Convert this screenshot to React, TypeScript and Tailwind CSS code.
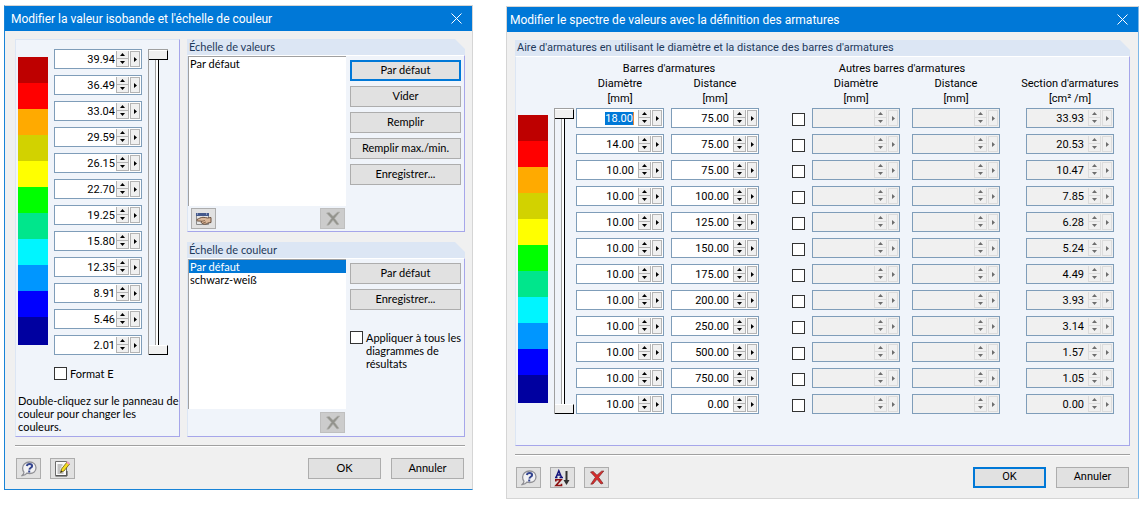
import { useState, type ReactNode } from "react";
import clsx from "clsx";

const BANDS = [
  "bg-[#be0000]",
  "bg-[#ff0000]",
  "bg-[#ffaa00]",
  "bg-[#d2d200]",
  "bg-[#ffff00]",
  "bg-[#00ff00]",
  "bg-[#00e68c]",
  "bg-[#00f5ff]",
  "bg-[#0096ff]",
  "bg-[#0000ff]",
  "bg-[#0000a0]",
];

const ISO_VALUES = [
  "39.94", "36.49", "33.04", "29.59", "26.15", "22.70",
  "19.25", "15.80", "12.35", "8.91", "5.46", "2.01",
];

const REBARS = [
  { diameter: "18.00", distance: "75.00", area: "33.93" },
  { diameter: "14.00", distance: "75.00", area: "20.53" },
  { diameter: "10.00", distance: "75.00", area: "10.47" },
  { diameter: "10.00", distance: "100.00", area: "7.85" },
  { diameter: "10.00", distance: "125.00", area: "6.28" },
  { diameter: "10.00", distance: "150.00", area: "5.24" },
  { diameter: "10.00", distance: "175.00", area: "4.49" },
  { diameter: "10.00", distance: "200.00", area: "3.93" },
  { diameter: "10.00", distance: "250.00", area: "3.14" },
  { diameter: "10.00", distance: "500.00", area: "1.57" },
  { diameter: "10.00", distance: "750.00", area: "1.05" },
  { diameter: "10.00", distance: "0.00", area: "0.00" },
];

type ButtonProps = {
  children: ReactNode;
  className?: string;
  primary?: boolean;
};

function Button({ children, className, primary }: ButtonProps) {
  return (
    <button
      type="button"
      className={clsx(
        "flex h-[21px] items-center justify-center whitespace-nowrap bg-[#e1e1e1]",
        primary ? "border-2 border-[#0078d7]" : "border border-[#adadad]",
        className
      )}
    >
      {children}
    </button>
  );
}

function IconButton({ label, disabled, children }: { label: string; disabled?: boolean; children: ReactNode }) {
  return (
    <button
      type="button"
      aria-label={label}
      disabled={disabled}
      className={clsx(
        "flex h-[21px] w-[25px] shrink-0 items-center justify-center border",
        disabled ? "border-[#bfbfbf] bg-[#cccccc]" : "border-[#adadad] bg-[#e1e1e1]"
      )}
    >
      {children}
    </button>
  );
}

function HelpIcon() {
  return (
    <svg width="16" height="16" viewBox="0 0 16 16">
      <path
        d="M8.500 1C12.400 1 15 3.400 15 6.800s-2.700 5.700-6.300 5.700c-1 0-1.900-.1-2.700-.4C5 13.500 3.400 14.300 1.200 14.500c1.100-.9 1.700-1.800 1.700-3.300C2 10.100 1.600 8.700 1.600 7 1.600 3.500 4.700 1 8.500 1z"
        fill="#f2f2f4"
        stroke="#909095"
        strokeWidth="1.300"
      />
      <path d="M5.800 5C6.100 3.500 7.100 2.900 8.500 2.900c1.700 0 2.600.8 2.600 2 0 1.900-2.500 1.800-2.700 3.700" fill="none" stroke="#34458f" strokeWidth="2" />
      <rect x="7.200" y="9.500" width="2" height="2" fill="#34458f" />
    </svg>
  );
}

function EditIcon() {
  return (
    <svg width="17" height="17" viewBox="0 0 17 17">
      <path d="M1.500 1.500h11v14h-11z" fill="#fafafa" stroke="#6c6c6c" />
      <path d="M1.500 16h11.500V11" fill="none" stroke="#444" />
      <path d="M3.500 5h5M3.500 7h4M3.500 9h3M3.500 11h3M3.500 13h6" stroke="#8a8a8a" />
      <path d="M6.500 12.500l1-3.500 5.500-7 2.500 2-5.500 7z" fill="#f5dc1e" stroke="#6b5a10" strokeWidth=".8" />
      <path d="M6.500 12.500l.6-2 1.400 1.100z" fill="#222" />
      <path d="M12.300 2.800l1.200-1.600 2.500 2-1.200 1.600z" fill="#f29bc0" />
    </svg>
  );
}

function BrowseIcon() {
  return (
    <svg width="17" height="14" viewBox="0 0 17 14">
      <path d="M1.500 1.500h12v11h-12z" fill="#e6e6e6" stroke="#8a8a8a" />
      <path d="M1 1h13v3H1z" fill="#44598c" />
      <path d="M2 2h1M11 2h1" stroke="#c8d4ee" />
      <path
        d="M2 7.500C4 6.500 5.500 5.500 8 5.300c2 0 3 .5 4.500.7l3.500-.5v5l-3 .5c-1.500 1-3 1.500-4.500 1L6 10.500l.8-1.300L3 9c-1.200 0-1.500-.8-1-1.500z"
        fill="#d9b79a"
        stroke="#5d4433"
        strokeWidth=".9"
      />
      <path d="M7 9.200l3-.7M8 11l3-1" stroke="#7b5a42" strokeWidth=".8" />
    </svg>
  );
}

function SortIcon() {
  return (
    <svg width="17" height="18" viewBox="0 0 17 18" fill="none">
      <path d="M1 8.500h2.500M5.500 8.500H9M2 8.500L4.800 1.800 7.600 8.500M3 6h3.500" stroke="#14147d" strokeWidth="1.500" />
      <path d="M1.800 12.500v-1.700H7L2 16.500h5.500v-1.700" stroke="#8c1010" strokeWidth="1.600" />
      <path d="M12.500 2v11" stroke="#303030" strokeWidth="2" />
      <path d="M9.500 11l3 5 3-5z" fill="#303030" />
    </svg>
  );
}

function CrossIcon({ disabled }: { disabled?: boolean }) {
  return (
    <svg width="16" height="16" viewBox="0 0 16 16">
      <path
        d="M1.500 2L4.200 1.500 8 5.200 12.500 1.200l2.300-.2L9.600 7.300l4.400 6-2 .7L8 9.300 4 14l-2.200.2L6.400 7.300z"
        fill={disabled ? "#92928c" : "#d92b2b"}
        stroke={disabled ? "#b0b0ac" : "#7a2626"}
        strokeWidth=".7"
      />
    </svg>
  );
}

type SpinFieldProps = {
  label: string;
  value?: string;
  disabled?: boolean;
  wide?: boolean;
  selected?: boolean;
};

function SpinField({ label, value = "", disabled, wide, selected }: SpinFieldProps) {
  const [text, setText] = useState(value);
  const face = clsx(
    "flex items-center justify-center border",
    disabled ? "border-[#dcdcdc] bg-[#f0f0f0] text-[#6d6d6d]" : "border-[#b4b4b4] bg-[#f0f0f0] text-black"
  );

  return (
    <div
      className={clsx(
        "mx-auto flex h-5 w-[88px] border border-[#7f9db9] p-px font-['Roboto',sans-serif]",
        disabled ? "bg-[#f0f0f0]" : "bg-white"
      )}
    >
      <div className={clsx("flex min-w-0 flex-1 items-center justify-end", wide ? "pr-1" : "pr-px")}>
        <input
          type="text"
          aria-label={label}
          value={text}
          readOnly={disabled}
          onChange={(e) => setText(e.target.value)}
          className={clsx(
            "h-[13px] text-right leading-[13px] outline-none",
            selected ? "w-[29px] border-r border-[#e08a3c] bg-[#0078d7] text-white" : "w-full min-w-0 bg-transparent text-black"
          )}
        />
      </div>
      <div className="flex w-[13px] flex-col">
        <button type="button" aria-label={`${label} +`} disabled={disabled} className={clsx(face, "flex-1 border-t-0")}>
          <svg width="5" height="3" viewBox="0 0 5 3">
            <path d="M0 3L2.500 0 5 3z" fill="currentColor" />
          </svg>
        </button>
        <button type="button" aria-label={`${label} -`} disabled={disabled} className={clsx(face, "flex-1 border-t-0")}>
          <svg width="5" height="3" viewBox="0 0 5 3">
            <path d="M0 0h5L2.500 3z" fill="currentColor" />
          </svg>
        </button>
      </div>
      <button type="button" aria-label={`${label} …`} disabled={disabled} className={clsx(face, "ml-px w-[10px]")}>
        <svg width="3" height="5" viewBox="0 0 3 5">
          <path d="M0 0l3 2.500L0 5z" fill="currentColor" />
        </svg>
      </button>
    </div>
  );
}

function ColorBands() {
  return (
    <div className="w-[30px] shrink-0">
      {BANDS.map((color, i) => (
        <div key={color} className={clsx(color, i === BANDS.length - 1 ? "h-7" : "h-[26px]")} />
      ))}
    </div>
  );
}

// Vertical range track with one thumb at each end
function RangeTrack({ className }: { className?: string }) {
  const thumb = "h-[10px] border-t border-r border-b border-t-white border-r-black border-b-black bg-[#f0f0f0]";
  return (
    <div className={clsx("flex w-5 shrink-0 flex-col border-t border-l border-[#a0a0a0]", className)}>
      <div className={thumb} />
      <div className="ml-[6px] w-1 flex-1 border-r border-l border-r-black border-l-[#a0a0a0] bg-white" />
      <div className={thumb} />
    </div>
  );
}

function Checkbox({ label, checked, onChange }: { label?: string; checked?: boolean; onChange?: () => void }) {
  return (
    <input
      type="checkbox"
      aria-label={label}
      checked={checked}
      onChange={onChange}
      className="block size-[13px] shrink-0 appearance-none border border-[#333] bg-white checked:bg-[#0078d7]"
    />
  );
}

function Group({ title, children, className }: { title: string; children: ReactNode; className?: string }) {
  return (
    <section className={clsx("flex flex-col", className)}>
      <h2 className="h-4 bg-[#dce6f4] pl-[2px] leading-4 text-[#1e395b] [clip-path:polygon(0_0,calc(100%-10px)_0,100%_10px,100%_100%,0_100%)]">
        {title}
      </h2>
      <div className="flex-1 border border-t-white border-r-[#a6a6ea] border-b-[#a6a6ea] border-l-[#dce6f4] bg-[#f0f4fa]">
        {children}
      </div>
    </section>
  );
}

function ListBox({ label, options, selected }: { label: string; options: string[]; selected?: string }) {
  return (
    <select
      size={11}
      aria-label={label}
      defaultValue={selected}
      className="block h-[150px] w-full appearance-none overflow-hidden border-t border-l border-[#a0a0a0] bg-white outline-none"
    >
      {options.map((option) => (
        <option
          key={option}
          className="h-[13px] min-h-0 px-px py-0 leading-[13px] checked:bg-[#0078d7]! checked:text-white!"
        >
          {option}
        </option>
      ))}
    </select>
  );
}

type DialogProps = {
  title: string;
  active?: boolean;
  icons: ReactNode;
  actions: ReactNode;
  children: ReactNode;
};

function Dialog({ title, active, icons, actions, children }: DialogProps) {
  return (
    <div
      role="dialog"
      aria-label={title}
      className={clsx(
        "border bg-[#f0f0f0]",
        active
          ? "border-t-[#d5d5d5] border-r-[#d5d5d5] border-b-[#1883d7] border-l-[#1883d7]"
          : "border-[#d5d5d5] border-r-[#7db8e8]"
      )}
    >
      <header className={clsx("flex h-[25px] items-center justify-between bg-[#0078d7] pr-[10px] text-white", active ? "pl-[6px]" : "pl-[3px]")}>
        <h1 className="font-['Roboto',sans-serif] text-[12px]">{title}</h1>
        <button type="button" aria-label="Fermer">
          <svg width="11" height="11" viewBox="0 0 11 11">
            <path d="M.5.5l10 10M10.500.5l-10 10" stroke="currentColor" />
          </svg>
        </button>
      </header>
      <div
        className={clsx(
          "pt-2 pb-[10px]",
          active ? "pr-[7px] pl-[10px] font-['Lato',sans-serif]" : "px-2 font-['Roboto',sans-serif]"
        )}
      >
        {children}
        <div className="mt-2 h-[2px] border-t border-[#a0a0a0] bg-white" />
        <footer className="flex justify-between px-px pt-[11px]">
          <div className="flex gap-[9px]">{icons}</div>
          <div className="flex gap-[10px]">{actions}</div>
        </footer>
      </div>
    </div>
  );
}

function IsobandDialog() {
  const [formatE, setFormatE] = useState(false);
  const [applyAll, setApplyAll] = useState(false);

  return (
    <Dialog
      active
      title="Modifier la valeur isobande et l'échelle de couleur"
      icons={
        <>
          <IconButton label="Aide"><HelpIcon /></IconButton>
          <IconButton label="Modifier"><EditIcon /></IconButton>
        </>
      }
      actions={
        <>
          <Button className="w-[73px]">OK</Button>
          <Button className="w-[73px]">Annuler</Button>
        </>
      }
    >
      <div className="flex gap-[7px]">
        <div className="w-[165px] shrink-0 border border-t-[#dce6f4] border-r-[#a6a6ea] border-b-[#a6a6ea] border-l-[#dce6f4] bg-[#f0f4fa] pt-[9px] pb-[3px] pl-[2px]">
          <div className="flex">
            <div className="pt-2">
              <ColorBands />
            </div>
            <div className="ml-[6px] flex flex-col gap-[6px]">
              {ISO_VALUES.map((value, i) => (
                <SpinField key={value} label={`Valeur ${i + 1}`} value={value} />
              ))}
            </div>
            <RangeTrack className="ml-[6px]" />
          </div>
          <label className="mt-3 ml-9 flex items-center gap-[3px] leading-[13px]">
            <Checkbox checked={formatE} onChange={() => setFormatE(!formatE)} />
            Format E
          </label>
          <p className="mt-[14px] leading-[13px]">
            Double-cliquez sur le panneau de couleur pour changer les
            <br />
            couleurs.
          </p>
        </div>

        <div className="flex flex-1 flex-col gap-[10px]">
          <Group title="Échelle de valeurs">
            <div className="flex gap-1 pr-[3px]">
              <div className="flex-1">
                <ListBox label="Échelle de valeurs" options={["Par défaut"]} />
                <div className="flex justify-between py-[2px] pr-px pl-[3px]">
                  <IconButton label="Parcourir"><BrowseIcon /></IconButton>
                  <IconButton label="Supprimer" disabled><CrossIcon disabled /></IconButton>
                </div>
              </div>
              <div className="flex w-[111px] flex-col gap-[5px] pt-1">
                <Button primary>Par défaut</Button>
                <Button>Vider</Button>
                <Button>Remplir</Button>
                <Button>Remplir max./min.</Button>
                <Button>Enregistrer...</Button>
              </div>
            </div>
          </Group>
          <Group title="Échelle de couleur" className="flex-1">
            <div className="flex gap-1 pr-[3px]">
              <div className="flex-1">
                <ListBox
                  label="Échelle de couleur"
                  options={["Par défaut", "schwarz-weiß"]}
                  selected="Par défaut"
                />
                <div className="flex justify-end py-[3px] pr-px">
                  <IconButton label="Supprimer" disabled><CrossIcon disabled /></IconButton>
                </div>
              </div>
              <div className="flex w-[111px] flex-col gap-[5px] pt-1">
                <Button>Par défaut</Button>
                <Button>Enregistrer...</Button>
                <label className="mt-4 flex gap-[3px] leading-[13px]">
                  <Checkbox checked={applyAll} onChange={() => setApplyAll(!applyAll)} />
                  <span>Appliquer à tous les diagrammes de résultats</span>
                </label>
              </div>
            </div>
          </Group>
        </div>
      </div>
    </Dialog>
  );
}

function RebarDialog() {
  const [others, setOthers] = useState<boolean[]>(REBARS.map(() => false));

  return (
    <Dialog
      title="Modifier le spectre de valeurs avec la définition des armatures"
      icons={
        <>
          <IconButton label="Aide"><HelpIcon /></IconButton>
          <IconButton label="Trier"><SortIcon /></IconButton>
          <IconButton label="Supprimer"><CrossIcon /></IconButton>
        </>
      }
      actions={
        <>
          <Button primary className="w-[73px]">OK</Button>
          <Button className="w-[73px]">Annuler</Button>
        </>
      }
    >
      <Group title="Aire d'armatures en utilisant le diamètre et la distance des barres d'armatures">
        <div className="flex pt-1 pb-[25px] pl-[2px]">
          <div className="pt-[54px]">
            <ColorBands />
          </div>
          <div className="ml-[6px] flex pt-[47px] pb-[6px]">
            <RangeTrack />
          </div>
          <table className="w-full flex-1 table-fixed border-collapse">
            <colgroup>
              <col className="w-[92px]" />
              <col className="w-[98px]" />
              <col className="w-[42px]" />
              <col className="w-[100px]" />
              <col className="w-[100px]" />
              <col />
            </colgroup>
            <thead className="leading-[15px] [&_th]:font-normal [&_th]:whitespace-nowrap">
              <tr>
                <th colSpan={2}>Barres d'armatures</th>
                <th />
                <th colSpan={2} className="pr-2">Autres barres d'armatures</th>
                <th />
              </tr>
              <tr>
                <th>Diamètre</th>
                <th>Distance</th>
                <th />
                <th>Diamètre</th>
                <th>Distance</th>
                <th className="pl-[5px]">Section d'armatures</th>
              </tr>
              <tr className="[&_th]:pb-[2px]">
                <th>[mm]</th>
                <th>[mm]</th>
                <th />
                <th>[mm]</th>
                <th>[mm]</th>
                <th className="pl-[5px]">[cm² /m]</th>
              </tr>
            </thead>
            <tbody className="[&_td]:pb-[6px] [&_td]:align-top">
              {REBARS.map((row, i) => (
                <tr key={i}>
                  <td>
                    <SpinField wide label={`Diamètre ${i + 1}`} value={row.diameter} selected={i === 0} />
                  </td>
                  <td>
                    <SpinField wide label={`Distance ${i + 1}`} value={row.distance} />
                  </td>
                  <td>
                    <div className="flex justify-end pt-[5px] pr-px">
                      <Checkbox
                        label={`Autres barres ${i + 1}`}
                        checked={others[i]}
                        onChange={() => setOthers(others.map((on, j) => (j === i ? !on : on)))}
                      />
                    </div>
                  </td>
                  <td>
                    <SpinField wide disabled label={`Autre diamètre ${i + 1}`} />
                  </td>
                  <td>
                    <SpinField wide disabled label={`Autre distance ${i + 1}`} />
                  </td>
                  <td className="pl-[5px]">
                    <SpinField wide disabled label={`Section ${i + 1}`} value={row.area} />
                  </td>
                </tr>
              ))}
            </tbody>
          </table>
        </div>
      </Group>
    </Dialog>
  );
}

export default function App() {
  return (
    <main className="grid min-h-screen grid-cols-[469fr_633fr] items-start gap-x-[33px] bg-white pt-[5px] pr-2 pl-1 text-[11px] text-black">
      <IsobandDialog />
      <div className="pt-px">
        <RebarDialog />
      </div>
    </main>
  );
}
